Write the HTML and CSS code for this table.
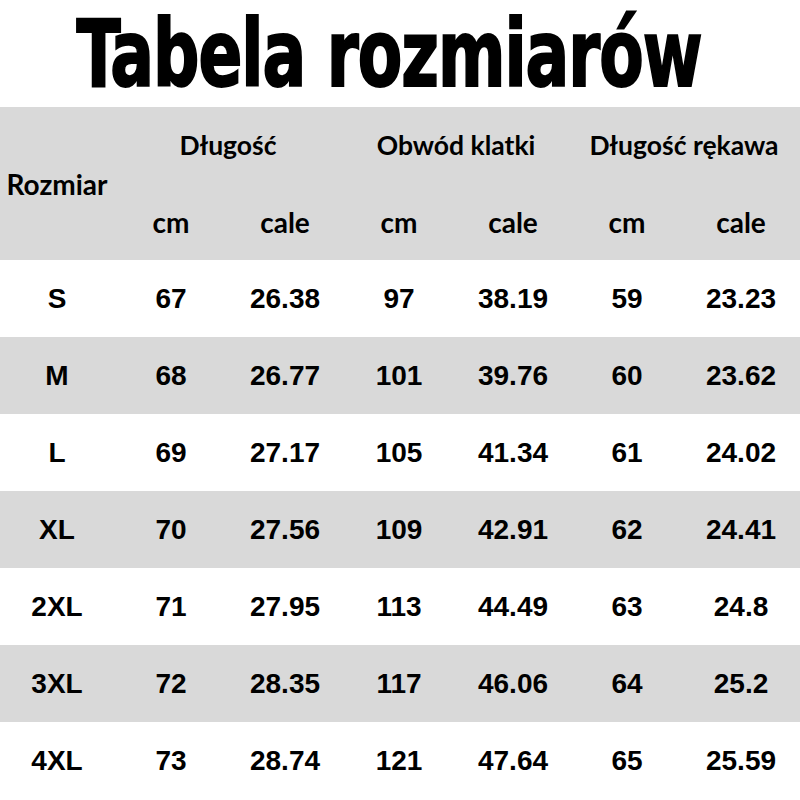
FILE: index.html
```html
<!DOCTYPE html>
<html lang="pl">
<head>
<meta charset="utf-8">
<title>Tabela rozmiarów</title>
<link rel="stylesheet" href="styles.css">
</head>
<body>
<div class="page">
  <h1 class="title"><span class="title-text">Tabela rozmiarów</span></h1>
  <div class="table">
    <div class="head">
      <div class="h size-h">Rozmiar</div>
      <div class="h group g1">Długość</div>
      <div class="h group g2">Obwód klatki</div>
      <div class="h group g3">Długość rękawa</div>
      <div class="h unit">cm</div>
      <div class="h unit">cale</div>
      <div class="h unit">cm</div>
      <div class="h unit">cale</div>
      <div class="h unit">cm</div>
      <div class="h unit">cale</div>
    </div>
    <div class="row"><div>S</div><div>67</div><div>26.38</div><div>97</div><div>38.19</div><div>59</div><div>23.23</div></div>
    <div class="row alt"><div>M</div><div>68</div><div>26.77</div><div>101</div><div>39.76</div><div>60</div><div>23.62</div></div>
    <div class="row"><div>L</div><div>69</div><div>27.17</div><div>105</div><div>41.34</div><div>61</div><div>24.02</div></div>
    <div class="row alt"><div>XL</div><div>70</div><div>27.56</div><div>109</div><div>42.91</div><div>62</div><div>24.41</div></div>
    <div class="row"><div>2XL</div><div>71</div><div>27.95</div><div>113</div><div>44.49</div><div>63</div><div>24.8</div></div>
    <div class="row alt"><div>3XL</div><div>72</div><div>28.35</div><div>117</div><div>46.06</div><div>64</div><div>25.2</div></div>
    <div class="row"><div>4XL</div><div>73</div><div>28.74</div><div>121</div><div>47.64</div><div>65</div><div>25.59</div></div>
  </div>
</div>
</body>
</html>
```
FILE: styles.css
```css
html, body {
  margin: 0;
  padding: 0;
  background: #ffffff;
}
.page {
  width: 800px;
  height: 800px;
  overflow: hidden;
  color: #000;
}
.title {
  margin: 0;
  height: 107px;
  padding-right: 22px;
  display: flex;
  justify-content: center;
  align-items: flex-start;
}
.title-text {
  display: inline-block;
  font-family: "DejaVu Sans", sans-serif;
  font-stretch: condensed;
  font-weight: 700;
  font-size: 72px;
  line-height: 84px;
  letter-spacing: -1px;
  -webkit-text-stroke: 1.5px #000;
  transform: scaleY(1.28);
  transform-origin: center top;
  white-space: nowrap;
}
.table {
  width: 800px;
}
.head {
  background: #d9d9d9;
  display: grid;
  grid-template-columns: repeat(7, 114px) 2px;
  grid-template-rows: 76px 77px;
  font-family: "Lato", "Open Sans", sans-serif;
  font-weight: 700;
  font-size: 28px;
}
.h {
  display: flex;
  align-items: center;
  justify-content: center;
}
.group {
  font-size: 26.5px;
}
.size-h {
  grid-row: 1 / 3;
  grid-column: 1;
}
.g1 { grid-column: 2 / 4; grid-row: 1; }
.g2 { grid-column: 4 / 6; grid-row: 1; }
.g3 { grid-column: 6 / 8; grid-row: 1; }
.unit { grid-row: 2; }
.row {
  display: grid;
  grid-template-columns: repeat(7, 114px) 2px;
  height: 77px;
  font-family: "Liberation Sans", Arial, sans-serif;
  font-weight: 700;
  font-size: 28px;
}
.row > div {
  display: flex;
  align-items: center;
  justify-content: center;
}
.row.alt {
  background: #d9d9d9;
}
```
